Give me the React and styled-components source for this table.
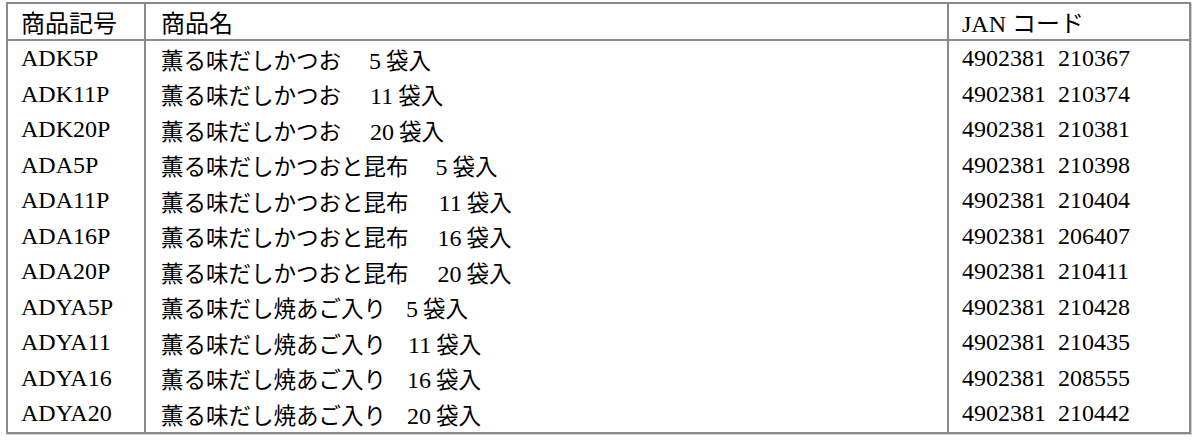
import React from 'react'
import styled, { createGlobalStyle } from 'styled-components'

const GlobalStyle = createGlobalStyle`
    body{
        margin: 0;
        background: #fff;
    }
`

const Wrapper = styled.div`
    padding: 2px 0 0 6px;
    width: 1200px;
    height: 440px;
    box-sizing: border-box;
`

const Table = styled.table`
    border-collapse: collapse;
    table-layout: fixed;
    width: 1185px;
    border: 2px solid #8a8a8a;
    box-shadow: 1px 1px 0 #d0d0d0;
    font-family: "Liberation Serif", "Noto Sans CJK JP", serif;
    font-size: 24px;
    color: #000;
    th, td{
        border-right: 2px solid #8a8a8a;
        padding: 0 0 0 13px;
        text-align: left;
        white-space: pre;
        overflow: hidden;
    }
    th{
        height: 35px;
        font-weight: normal;
        border-bottom: 2px solid #8a8a8a;
    }
    td{
        height: 35.5px;
    }
`

const Cell = styled.td`
    font-size: ${p => (p.$cjk ? '22.5px' : '24px')};
    padding-left: ${p => (p.$cjk ? '15px' : '13px')} !important;
`

const Num = styled.span`
    font-size: 24px;
    margin-left: ${p => p.$gap}px;
    margin-right: 5px;
`

const Gap = styled.span`
    display: inline-block;
    width: ${p => p.$w}px;
`

const rows = [
    ['ADK5P', '薫る味だしかつお', '5', '210367', 28],
    ['ADK11P', '薫る味だしかつお', '11', '210374', 29],
    ['ADK20P', '薫る味だしかつお', '20', '210381', 29],
    ['ADA5P', '薫る味だしかつおと昆布', '5', '210398', 27],
    ['ADA11P', '薫る味だしかつおと昆布', '11', '210404', 30],
    ['ADA16P', '薫る味だしかつおと昆布', '16', '206407', 29],
    ['ADA20P', '薫る味だしかつおと昆布', '20', '210411', 29],
    ['ADYA5P', '薫る味だし焼あご入り', '5', '210428', 20],
    ['ADYA11', '薫る味だし焼あご入り', '11', '210435', 22],
    ['ADYA16', '薫る味だし焼あご入り', '16', '208555', 21],
    ['ADYA20', '薫る味だし焼あご入り', '20', '210442', 21],
]

const App = () => {
    return (
        <Wrapper>
            <GlobalStyle />
            <Table>
                <colgroup>
                    <col style={{ width: 138 }} />
                    <col style={{ width: 803 }} />
                    <col />
                </colgroup>
                <thead>
                    <tr>
                        <th>商品記号</th>
                        <th style={{ paddingLeft: 15 }}>商品名</th>
                        <th>JAN コード</th>
                    </tr>
                </thead>
                <tbody>
                    {rows.map(([code, name, count, jan, gap]) => (
                        <tr key={code}>
                            <Cell>{code}</Cell>
                            <Cell $cjk>
                                {name}
                                <Num $gap={gap}>{count}</Num>
                                袋入
                            </Cell>
                            <Cell>4902381<Gap $w={12} />{jan}</Cell>
                        </tr>
                    ))}
                </tbody>
            </Table>
        </Wrapper>
    )
}

export default App
